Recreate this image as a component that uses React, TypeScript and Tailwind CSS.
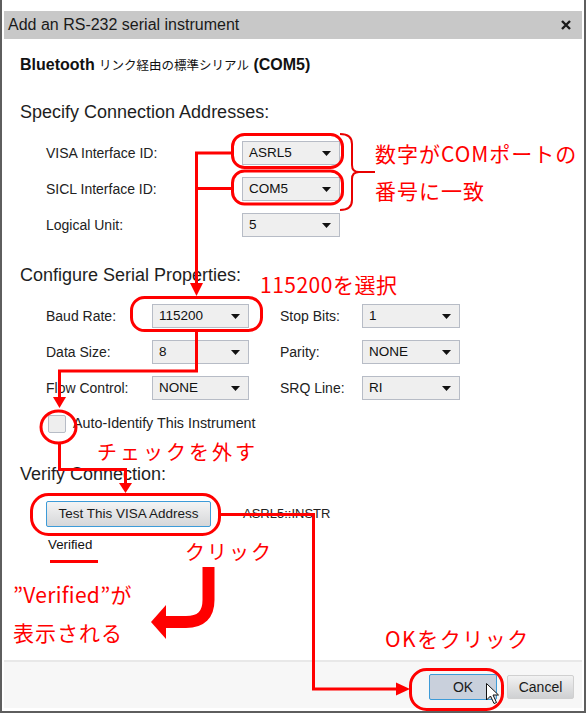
import React from "react";

const UI = "font-['Liberation_Sans','Noto_Sans_CJK_JP',sans-serif]";
const NOTE = "font-['Noto_Sans_CJK_JP','Noto_Sans',sans-serif] text-[#ff0000]";

function Combo({ value, width }: { value: string; width: string }) {
  return (
    <div
      className={`flex h-[24px] ${width} items-center justify-between border border-[#b7bcc6] bg-[#efefef] pl-[6px] pr-[8px] text-[13.5px] text-[#111]`}
    >
      <span>{value}</span>
      <svg width="9" height="5" viewBox="0 0 9 5">
        <path d="M0 0h9L4.5 5z" fill="#111" />
      </svg>
    </div>
  );
}

function Heading({ children }: { children: React.ReactNode }) {
  return <div className="h-[22px] text-[18px] leading-[22px] text-[#1e1e1e]">{children}</div>;
}

function AddressRow({ label, value }: { label: string; value: string }) {
  return (
    <div className="flex items-center">
      <span className="w-[196px] text-[14px] text-[#222]">{label}</span>
      <Combo value={value} width="w-[98px]" />
    </div>
  );
}

function SerialRow({ l1, v1, l2, v2 }: { l1: string; v1: string; l2: string; v2: string }) {
  return (
    <div className="flex items-center">
      <span className="w-[106px] text-[14px] text-[#222]">{l1}</span>
      <Combo value={v1} width="w-[97px]" />
      <span className="ml-[31px] w-[82px] text-[14px] text-[#222]">{l2}</span>
      <Combo value={v2} width="w-[98px]" />
    </div>
  );
}

function Annotations() {
  return (
    <svg className="pointer-events-none absolute left-0 top-0" width="586" height="713" viewBox="0 0 586 713">
      <g stroke="#ff0000" strokeWidth="3" fill="none">
        <rect x="232.5" y="134.5" width="110" height="33" rx="12" />
        <rect x="232.5" y="171" width="110" height="33" rx="12" />
        <rect x="131.5" y="297.5" width="130" height="33" rx="13" />
        <ellipse cx="58.5" cy="427" rx="17.5" ry="16" />
        <rect x="31.5" y="494.5" width="188" height="40" rx="17" />
        <rect x="410.5" y="669.5" width="92" height="40" rx="16" />
        <polyline points="232,153 196.5,153 196.5,285" />
        <line x1="196" y1="188.5" x2="232" y2="188.5" />
        <polyline points="196.5,331 196.5,371 59.5,371 59.5,398" />
        <polyline points="59.5,443 59.5,469.5 125.5,469.5 125.5,484" />
        <polyline points="220,514.5 313.5,514.5 313.5,689 398,689" />
      </g>
      <g fill="#ff0000">
        <polygon points="190,283 203,283 196.5,296" />
        <polygon points="53,397 66,397 59.5,408" />
        <polygon points="119,483 132,483 125.5,493" />
        <polygon points="396,682.5 396,695.5 410,689" />
        <rect x="50" y="560" width="48" height="3" />
        <polygon points="151,622 166,605 166,639" />
      </g>
      <path d="M208.5 567 V600 Q208.5 622 186 622 H164" stroke="#ff0000" strokeWidth="12" fill="none" />
      <path
        d="M340 134 Q352 134 352 144 V165 Q352 172 359 172 H375 M359 172 Q352 172 352 179 V200 Q352 210 340 210"
        stroke="#e80000"
        strokeWidth="2"
        fill="none"
      />
      <path
        d="M486.5 683.5 V700 L490.5 696 L494 703.5 L496.5 702.5 L493 695 H498.5 Z"
        fill="#fff"
        stroke="#111"
        strokeWidth="1"
        strokeLinejoin="round"
      />
    </svg>
  );
}

function Notes() {
  return (
    <>
      <div className={`absolute left-[375px] top-[141px] text-[21px] leading-[24px] tracking-[1px] ${NOTE}`}>数字がCOMポートの</div>
      <div className={`absolute left-[375px] top-[178px] text-[21px] leading-[24px] tracking-[1px] ${NOTE}`}>番号に一致</div>
      <div className={`absolute left-[260px] top-[272px] text-[21px] leading-[24px] tracking-[0.5px] ${NOTE}`}>115200を選択</div>
      <div className={`absolute left-[97px] top-[440px] text-[20px] leading-[24px] tracking-[3px] ${NOTE}`}>チェックを外す</div>
      <div className={`absolute left-[185px] top-[540px] text-[20px] leading-[24px] tracking-[2px] ${NOTE}`}>クリック</div>
      <div className={`absolute left-[13px] top-[582px] text-[21px] leading-[24px] tracking-[0.3px] ${NOTE}`}>”Verified”が</div>
      <div className={`absolute left-[13px] top-[620px] text-[21px] leading-[24px] tracking-[1px] ${NOTE}`}>表示される</div>
      <div className={`absolute left-[385px] top-[626px] text-[21px] leading-[24px] tracking-[1.5px] ${NOTE}`}>OKをクリック</div>
    </>
  );
}

export default function App() {
  return (
    <div className={`relative h-[713px] w-[586px] overflow-hidden bg-white ${UI}`}>
      <div className="flex h-[713px] w-[586px] flex-col border-x-2 border-b-2 border-[#5e5e5e] px-[2px] pt-[11px]">
        {/* title bar */}
        <div className="flex h-[28px] items-center justify-between bg-[#c8c8c8] pl-[4px] pr-[11px]">
          <span className="text-[16px] text-[#1a1a1a]">Add an RS-232 serial instrument</span>
          <svg width="10" height="10" viewBox="0 0 10 10">
            <path d="M1 1L9 9M9 1L1 9" stroke="#1a1a1a" strokeWidth="2.4" />
          </svg>
        </div>

        {/* body */}
        <div className="h-[621px] pl-[16px]">
          <div className="mt-[16px] h-[20px] text-[16px] font-bold leading-[20px] text-[#111]">
            Bluetooth <span className="text-[12.5px] font-normal">リンク経由の標準シリアル</span> (COM5)
          </div>

          <div className="mt-[26px]">
            <Heading>Specify Connection Addresses:</Heading>
          </div>
          <div className="mt-[18px] flex flex-col gap-[12px] pl-[26px]">
            <AddressRow label="VISA Interface ID:" value="ASRL5" />
            <AddressRow label="SICL Interface ID:" value="COM5" />
            <AddressRow label="Logical Unit:" value="5" />
          </div>

          <div className="mt-[27px]">
            <Heading>Configure Serial Properties:</Heading>
          </div>
          <div className="mt-[18px] flex flex-col gap-[12px] pl-[26px]">
            <SerialRow l1="Baud Rate:" v1="115200" l2="Stop Bits:" v2="1" />
            <SerialRow l1="Data Size:" v1="8" l2="Parity:" v2="NONE" />
            <SerialRow l1="Flow Control:" v1="NONE" l2="SRQ Line:" v2="RI" />
          </div>

          <div className="mt-[15px] flex h-[18px] items-center pl-[28px]">
            <div className="h-[18px] w-[18px] rounded-[2px] border border-[#b7bcc6] bg-[#eeeeee]" />
            <span className="ml-[7px] text-[14.3px] text-[#222]">Auto-Identify This Instrument</span>
          </div>

          <div className="mt-[30px]">
            <Heading>Verify Connection:</Heading>
          </div>
          <div className="mt-[16px] flex items-center pl-[26px]">
            <button className="h-[26px] w-[165px] rounded-[2px] border border-[#3d9bd8] bg-gradient-to-b from-[#f4f4f4] to-[#d6d7d9] text-[13.5px] text-[#1a1a1a]">
              Test This VISA Address
            </button>
            <span className="ml-[32px] text-[13px] text-[#222]">ASRL5::INSTR</span>
          </div>
          <div className="mt-[10px] h-[16px] pl-[28px] text-[13.3px] leading-[16px] text-[#111]">Verified</div>
        </div>

        {/* footer */}
        <div className="h-[2px] bg-[#e8e8e8]" />
        <div className="flex h-[46px] items-start justify-end gap-[10px] bg-[#f7f7f7] pr-[8px] pt-[12px]">
          <button className="h-[26px] w-[68px] rounded-[2px] border border-[#3d9bd8] bg-[#c9d0dc] text-[14px] text-[#1a1a1a]">
            OK
          </button>
          <button className="mt-[1px] h-[24px] w-[67px] rounded-[2px] border border-[#d0d0d0] bg-gradient-to-b from-[#f2f2f2] to-[#cfd0d2] text-[14px] text-[#1a1a1a]">
            Cancel
          </button>
        </div>
      </div>

      <Notes />
      <Annotations />
    </div>
  );
}
